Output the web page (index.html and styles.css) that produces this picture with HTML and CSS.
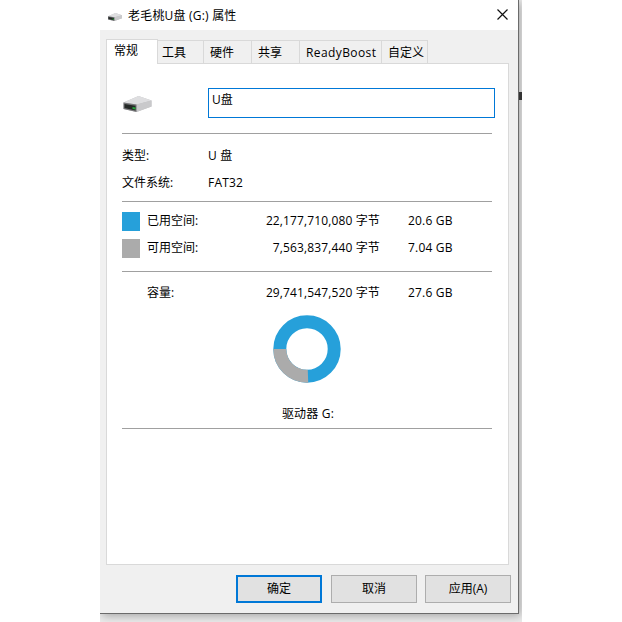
FILE: index.html
```html
<!DOCTYPE html>
<html lang="zh-CN">
<head>
<meta charset="utf-8">
<title>老毛桃U盘 (G:) 属性</title>
<link rel="stylesheet" href="styles.css">
</head>
<body>
<div class="desktop">
  <span class="speck"></span>
  <main class="window">
    <header class="titlebar">
      <svg class="title-icon" viewBox="0 0 28 16" width="14" height="8"><use href="#drive"/></svg>
      <h1>老毛桃U盘 (G:) 属性</h1>
      <svg class="close" viewBox="0 0 11 11" width="11" height="11"><path d="M.5.5l10 10M10.500.5l-10 10" stroke="#111" stroke-width="1.2" fill="none"/></svg>
    </header>
    <div class="body">
      <nav class="tabs">
        <span class="tab active">常规</span>
        <span class="tab tools">工具</span>
        <span class="tab hardware">硬件</span>
        <span class="tab share">共享</span>
        <span class="tab boost">ReadyBoost</span>
        <span class="tab custom">自定义</span>
      </nav>
      <section class="panel">
        <div class="name-row">
          <svg class="drive-icon" viewBox="0 0 28 16" width="29" height="16">
            <g id="drive">
              <path d="M0 6.500L15 0l13 4.500v6L13 16 0 13z" fill="#bfbfc1"/>
              <path d="M0 6.500L15 0l13 4.500L13 8.500z" fill="#dedee0"/>
              <path d="M13 8.500l15-4v6L13 16z" fill="#c9c9cb"/>
              <path d="M0 6.500l13 2V16L0 13z" fill="#77777a"/>
              <path d="M1 8l11 1.800v4.700L1 12z" fill="#252927"/>
              <path d="M9 11l3 .5v2L9 13z" fill="#27a83a"/>
            </g>
          </svg>
          <div class="field">U盘</div>
        </div>
        <div class="group info">
          <div class="row"><span>类型:</span><span class="kind">U 盘</span></div>
          <div class="row"><span>文件系统:</span><span class="kind">FAT32</span></div>
        </div>
        <div class="group usage">
          <div class="row"><i class="swatch used"></i><span>已用空间:</span><span class="bytes">22,177,710,080 字节</span><span class="size">20.6 GB</span></div>
          <div class="row"><i class="swatch free"></i><span>可用空间:</span><span class="bytes">7,563,837,440 字节</span><span class="size">7.04 GB</span></div>
        </div>
        <div class="group capacity">
          <div class="row"><i></i><span>容量:</span><span class="bytes">29,741,547,520 字节</span><span class="size">27.6 GB</span></div>
          <svg class="donut" viewBox="0 0 68 68" width="68" height="68">
            <circle cx="34" cy="34" r="27.200" fill="none" stroke="#26a0da" stroke-width="13"/>
            <path d="M35 61.200A27.200 27.200 0 0 1 6.800 34" fill="none" stroke="#ababab" stroke-width="13"/>
          </svg>
          <div class="drive-name">驱动器 G:</div>
        </div>
        <div class="group"></div>
      </section>
      <footer class="buttons">
        <button class="ok">确定</button>
        <button>取消</button>
        <button class="apply">应用(A)</button>
      </footer>
    </div>
  </main>
</div>
</body>
</html>
```
FILE: styles.css
```css
* { box-sizing: border-box; }

body {
  margin: 0;
  background: #fff;
  color: #000;
  font: 12px/16px "Open Sans", "Noto Sans CJK SC", sans-serif;
  overflow: hidden;
}

.desktop {
  position: relative;
  width: 422px;
  height: 622px;
  margin-left: 100px;
  overflow: hidden;
  background: #ececec;
}

.speck {
  position: absolute;
  left: 419px;
  top: 92px;
  width: 3px;
  height: 8px;
  background: #333;
}

.window {
  width: 419px;
  height: 614px;
  border-right: 1px solid #6b6b6b;
  border-bottom: 1px solid #6b6b6b;
  background: #f0f0f0;
  box-shadow: 2px 2px 9px rgba(0, 0, 0, .3);
}

.titlebar {
  display: flex;
  align-items: center;
  height: 30px;
  padding: 0 10px 0 8px;
  background: #fff;
}

.title-icon { margin-top: 4px; }

h1 {
  flex: 1;
  margin: 1px 0 0 6px;
  font-size: 12px;
  font-weight: 400;
  letter-spacing: .2px;
}

.close { margin-top: -2px; }

.body { padding: 9px 7px 0 6px; }

.tabs {
  position: relative;
  z-index: 1;
  display: flex;
  align-items: flex-end;
  height: 25px;
  margin-bottom: -1px;
}

.tab {
  height: 23px;
  margin-bottom: 1px;
  padding: 4px 0 0 6px;
  border: 1px solid #d9d9d9;
  border-width: 1px 1px 0 0;
}

.active {
  width: 52px;
  height: 25px;
  margin-bottom: 0;
  padding-left: 7px;
  padding-top: 3px;
  border-left-width: 1px;
  background: #fff;
}

.tools { width: 46px; padding-left: 4px; }
.hardware { width: 48px; }
.share { width: 48px; }
.boost { width: 82px; letter-spacing: .4px; }
.custom { width: 46px; }

.panel {
  width: 403px;
  height: 502px;
  padding: 24px 13px 0 15px;
  border: 1px solid #d9d9d9;
  background: #fff;
}

.name-row {
  display: flex;
  justify-content: space-between;
  width: 373px;
  height: 45px;
}

.drive-icon { margin: 8px 0 0 1px; }

.field {
  width: 287px;
  height: 30px;
  flex: none;
  padding: 3px 3px 0;
  border: 1px solid #0078d7;
}

.group {
  width: 370px;
  border-top: 1px solid #a0a0a0;
}

.row {
  display: grid;
  align-items: center;
  height: 27px;
}

.info { height: 68px; padding-top: 8px; }
.info .row { grid-template-columns: 86px 1fr; }
.kind { letter-spacing: .2px; }

.usage { height: 70px; padding-top: 5px; }

.usage .row,
.capacity .row { grid-template-columns: 25px 75px 158px 1fr; }

.swatch { width: 18px; height: 19px; margin-top: 1px; }
.used { background: #26a0da; }
.free { background: #ababab; }

.bytes { text-align: right; letter-spacing: .13px; }
.size { padding-left: 28px; letter-spacing: .2px; }

.capacity { height: 157px; padding-top: 7px; }

.donut { display: block; margin: 9px 0 0 151px; }

.drive-name {
  margin-top: 23px;
  padding-left: 2px;
  text-align: center;
  letter-spacing: .2px;
}

.buttons {
  display: flex;
  justify-content: flex-end;
  gap: 9px;
  margin-top: 10px;
}

button {
  width: 86px;
  height: 28px;
  padding: 0;
  border: 1px solid #adadad;
  background: #e1e1e1;
  color: #000;
  font: inherit;
}

.ok { border: 2px solid #0078d7; }
.apply { margin-left: -1px; }
```
